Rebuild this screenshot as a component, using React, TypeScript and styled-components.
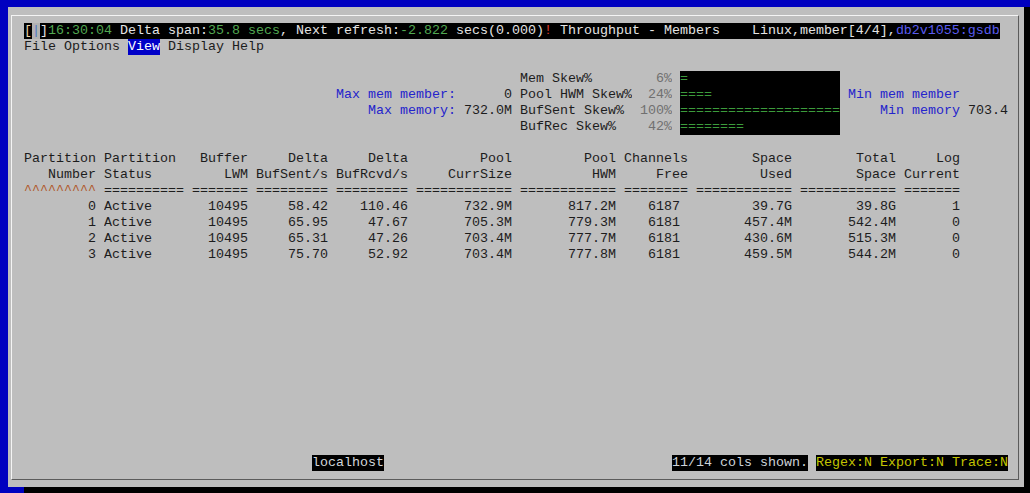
import React from "react";
import styled, { createGlobalStyle } from "styled-components";

const CW = 8; // width of one terminal cell
const cols = (n: number) => `${n * CW}px`;

const Global = createGlobalStyle`
  html, body { margin: 0; padding: 0; background: #0000c0; }
  body { width: 1030px; height: 493px; overflow: hidden; }
`;

const Desktop = styled.div`
  width: 1030px;
  height: 493px;
  box-sizing: border-box;
  background: #0000c0;
  padding: 7px 0 0 8px;
  overflow: hidden;
`;

const Console = styled.div`
  width: 1016px;
  height: 480px;
  box-sizing: border-box;
  background: #bebebe;
  padding: 8px 0 0 3px;
  box-shadow: 6px 0 0 #000, 16px 6px 0 #000;
`;

const Terminal = styled.div`
  width: 1008px;
  height: 465px;
  box-sizing: border-box;
  border-top: 1px solid #f4f4f4;
  border-left: 1px solid #f4f4f4;
  border-right: 1px solid #5c5c5c;
  border-bottom: 1px solid #5c5c5c;
  padding: 7px 0 8px 12px;
  display: flex;
  flex-direction: column;
  font-family: "Liberation Mono", "Courier New", monospace;
  font-size: 13.3333px;
  line-height: 16px;
  color: #1c1c1c;
  white-space: pre;
`;

const Row = styled.div<{ $gapAfter?: number }>`
  display: flex;
  height: 16px;
  margin-bottom: ${(p) => (p.$gapAfter ?? 0) * 16}px;
`;

const Seg = styled.span<{ $fg?: string; $bg?: string }>`
  color: ${(p) => p.$fg ?? "inherit"};
  background: ${(p) => p.$bg ?? "transparent"};
`;

const MenuItem = styled.span<{ $active?: boolean }>`
  color: ${(p) => (p.$active ? "#ffffff" : "#1c1c1c")};
  background: ${(p) => (p.$active ? "#0000c8" : "transparent")};
  margin-right: ${cols(1)};
`;

/* ---------- stats panel ---------- */
const Stats = styled.div`
  display: grid;
  grid-template-columns: ${cols(54)} ${cols(6)} ${cols(14)} ${cols(4)} ${cols(20)} ${cols(14)} auto;
  column-gap: ${cols(1)};
  grid-auto-rows: 16px;
  margin-bottom: 16px;
`;

const Cell = styled.span<{ $align?: "left" | "right"; $fg?: string }>`
  text-align: ${(p) => p.$align ?? "left"};
  color: ${(p) => p.$fg ?? "inherit"};
  overflow: hidden;
`;

const Bar = styled.span`
  background: #000;
  color: #3c9c3c;
  overflow: hidden;
`;

/* ---------- table ---------- */
const Table = styled.div<{ $template: string }>`
  display: grid;
  grid-template-columns: ${(p) => p.$template};
  column-gap: ${cols(1)};
  grid-auto-rows: 16px;
`;

const TCell = styled.span<{ $align: "left" | "right"; $pad?: number; $fg?: string }>`
  text-align: ${(p) => p.$align};
  padding-right: ${(p) => cols(p.$pad ?? 0)};
  color: ${(p) => p.$fg ?? "inherit"};
  overflow: hidden;
`;

/* ---------- status line ---------- */
const StatusBar = styled.div`
  display: flex;
  height: 16px;
  margin-top: auto;
`;

const Tag = styled.span<{ $fg: string; $offset: number }>`
  background: #000;
  color: ${(p) => p.$fg};
  margin-left: ${(p) => cols(p.$offset)};
`;

const WHITE = "#e4e4e4";
const GREEN = "#52a852";

type Col = { h1: string; h2: string; w: number; align: "left" | "right"; under: string; pad?: number };

const columns: Col[] = [
  { h1: "Partition", h2: "Number", w: 9, align: "right", under: "^" },
  { h1: "Partition", h2: "Status", w: 10, align: "left", under: "=" },
  { h1: "Buffer", h2: "LWM", w: 7, align: "right", under: "=" },
  { h1: "Delta", h2: "BufSent/s", w: 9, align: "right", under: "=" },
  { h1: "Delta", h2: "BufRcvd/s", w: 9, align: "right", under: "=" },
  { h1: "Pool", h2: "CurrSize", w: 12, align: "right", under: "=" },
  { h1: "Pool", h2: "HWM", w: 12, align: "right", under: "=" },
  { h1: "Channels", h2: "Free", w: 8, align: "right", under: "=", pad: 1 },
  { h1: "Space", h2: "Used", w: 12, align: "right", under: "=" },
  { h1: "Total", h2: "Space", w: 12, align: "right", under: "=" },
  { h1: "Log", h2: "Current", w: 7, align: "right", under: "=" },
];

const rows: string[][] = [
  ["0", "Active", "10495", "58.42", "110.46", "732.9M", "817.2M", "6187", "39.7G", "39.8G", "1"],
  ["1", "Active", "10495", "65.95", "47.67", "705.3M", "779.3M", "6181", "457.4M", "542.4M", "0"],
  ["2", "Active", "10495", "65.31", "47.26", "703.4M", "777.7M", "6181", "430.6M", "515.3M", "0"],
  ["3", "Active", "10495", "75.70", "52.92", "703.4M", "777.8M", "6181", "459.5M", "544.2M", "0"],
];

type StatRow = { label: string; value: string; skew: string; pct: string; bar: number; minLabel: string; minValue: string };

const stats: StatRow[] = [
  { label: "", value: "", skew: "Mem Skew%", pct: "6%", bar: 1, minLabel: "", minValue: "" },
  { label: "Max mem member:", value: "0", skew: "Pool HWM Skew%", pct: "24%", bar: 4, minLabel: "Min mem member", minValue: "" },
  { label: "Max memory:", value: "732.0M", skew: "BufSent Skew%", pct: "100%", bar: 20, minLabel: "Min memory", minValue: "703.4" },
  { label: "", value: "", skew: "BufRec Skew%", pct: "42%", bar: 8, minLabel: "", minValue: "" },
];

const LABEL_BLUE = "#2424cc";

export default function App() {
  const template = columns.map((c) => cols(c.w)).join(" ");
  return (
    <Desktop>
      <Global />
      <Console>
        <Terminal>
          <Row>
            <Seg $fg="#e8d2a8" $bg="#000">[</Seg>
            <Seg $fg="#4a78c4" $bg="#b2b2b2">|</Seg>
            <Seg $fg={WHITE} $bg="#000">]</Seg>
            <Seg $fg={GREEN} $bg="#000">16:30:04</Seg>
            <Seg $fg={WHITE} $bg="#000"> Delta span:</Seg>
            <Seg $fg={GREEN} $bg="#000">35.8 secs</Seg>
            <Seg $fg={WHITE} $bg="#000">, Next refresh:</Seg>
            <Seg $fg={GREEN} $bg="#000">-2.822</Seg>
            <Seg $fg={WHITE} $bg="#000"> secs(0.000)</Seg>
            <Seg $fg="#e03a2a" $bg="#000">!</Seg>
            <Seg $fg={WHITE} $bg="#000"> Throughput - Members    Linux,member[4/4],</Seg>
            <Seg $fg="#5a5cf0" $bg="#000">db2v1055:gsdb</Seg>
          </Row>
          <Row $gapAfter={1}>
            <MenuItem>File</MenuItem>
            <MenuItem>Options</MenuItem>
            <MenuItem $active>View</MenuItem>
            <MenuItem>Display</MenuItem>
            <MenuItem>Help</MenuItem>
          </Row>

          <Stats>
            {stats.map((s, i) => (
              <React.Fragment key={i}>
                <Cell $align="right" $fg={LABEL_BLUE}>{s.label}</Cell>
                <Cell $align="right">{s.value}</Cell>
                <Cell>{s.skew}</Cell>
                <Cell $align="right" $fg="#707070">{s.pct}</Cell>
                <Bar>{"=".repeat(s.bar)}</Bar>
                <Cell $align="right" $fg={LABEL_BLUE}>{s.minLabel}</Cell>
                <Cell>{s.minValue}</Cell>
              </React.Fragment>
            ))}
          </Stats>

          <Table $template={template}>
            {columns.map((c, i) => (
              <TCell key={`h1-${i}`} $align={c.align}>{c.h1}</TCell>
            ))}
            {columns.map((c, i) => (
              <TCell key={`h2-${i}`} $align={c.align}>{c.h2}</TCell>
            ))}
            {columns.map((c, i) => (
              <TCell key={`u-${i}`} $align="left" $fg={c.under === "^" ? "#b0582a" : undefined}>
                {c.under.repeat(c.w)}
              </TCell>
            ))}
            {rows.map((r, ri) =>
              r.map((v, ci) => (
                <TCell key={`r${ri}-${ci}`} $align={columns[ci].align} $pad={columns[ci].pad}>
                  {v}
                </TCell>
              ))
            )}
          </Table>

          <StatusBar>
            <Tag $fg="#d2d6da" $offset={36}>localhost</Tag>
            <Tag $fg="#cdd2d8" $offset={36}>11/14 cols shown.</Tag>
            <Tag $fg="#c4c400" $offset={1}>Regex:N Export:N Trace:N</Tag>
          </StatusBar>
        </Terminal>
      </Console>
    </Desktop>
  );
}
